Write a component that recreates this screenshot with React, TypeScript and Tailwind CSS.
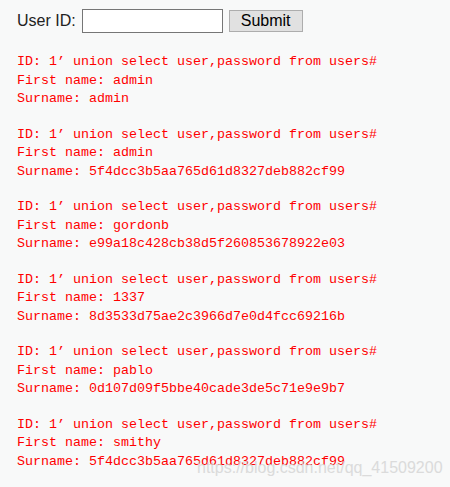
import React from "react";

const rows = [
  ["admin", "admin"],
  ["admin", "5f4dcc3b5aa765d61d8327deb882cf99"],
  ["gordonb", "e99a18c428cb38d5f260853678922e03"],
  ["1337", "8d3533d75ae2c3966d7e0d4fcc69216b"],
  ["pablo", "0d107d09f5bbe40cade3de5c71e9e9b7"],
  ["smithy", "5f4dcc3b5aa765d61d8327deb882cf99"],
];

export default function App() {
  return (
    <div className="relative w-[450px] h-[487px] overflow-hidden bg-[#f8f9f9] pl-[17px] pt-[9px]">
      <div className="flex items-center h-[24px] font-['Liberation_Sans',Arial,sans-serif] text-[16px] text-[#222]">
        <span>User ID:</span>
        <input
          type="text"
          className="ml-[6px] w-[141px] h-[24px] bg-white border border-[#767676] outline-none"
        />
        <button className="ml-[6px] w-[74px] h-[22px] bg-[#e1e1e1] border border-[#adadad] text-[16px] text-black leading-none">
          Submit
        </button>
      </div>
      <div className="mt-[20px] flex flex-col gap-[17px] font-['Liberation_Mono','Courier_New',monospace] text-[13.33px] leading-[18.5px] text-[#ff0000] whitespace-pre">
        {rows.map(([f, s], i) => (
          <div key={i}>
            <div>ID: 1’ union select user,password from users#</div>
            <div>First name: {f}</div>
            <div>Surname: {s}</div>
          </div>
        ))}
      </div>
      <div className="absolute left-[197px] top-[459px] font-['Liberation_Sans',Arial,sans-serif] text-[16px] leading-[18px] text-[#d4d4d4] opacity-80 whitespace-nowrap pointer-events-none">
        https://blog.csdn.net/qq_41509200
      </div>
    </div>
  );
}
